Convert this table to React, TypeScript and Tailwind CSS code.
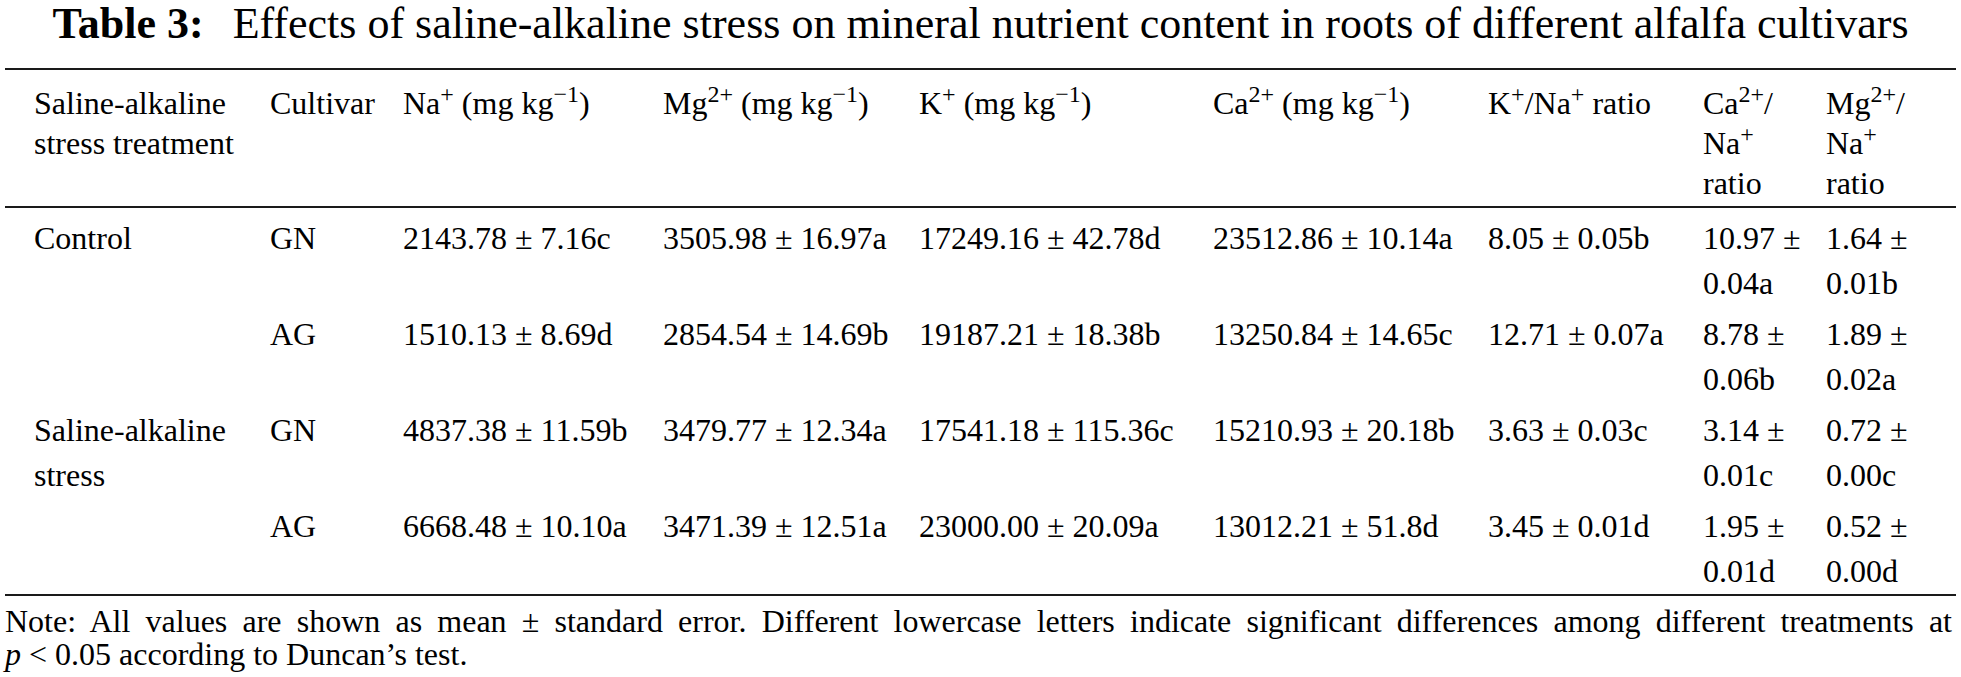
import React from "react";

type Row = {
  t: React.ReactNode;
  c: string;
  v: string[];
  r1: [string, string];
  r2: [string, string];
};

const rows: Row[] = [
  {
    t: "Control",
    c: "GN",
    v: ["2143.78 ± 7.16c", "3505.98 ± 16.97a", "17249.16 ± 42.78d", "23512.86 ± 10.14a", "8.05 ± 0.05b"],
    r1: ["10.97 ±", "0.04a"],
    r2: ["1.64 ±", "0.01b"],
  },
  {
    t: "",
    c: "AG",
    v: ["1510.13 ± 8.69d", "2854.54 ± 14.69b", "19187.21 ± 18.38b", "13250.84 ± 14.65c", "12.71 ± 0.07a"],
    r1: ["8.78 ±", "0.06b"],
    r2: ["1.89 ±", "0.02a"],
  },
  {
    t: (
      <>
        Saline-alkaline
        <br />
        stress
      </>
    ),
    c: "GN",
    v: ["4837.38 ± 11.59b", "3479.77 ± 12.34a", "17541.18 ± 115.36c", "15210.93 ± 20.18b", "3.63 ± 0.03c"],
    r1: ["3.14 ±", "0.01c"],
    r2: ["0.72 ±", "0.00c"],
  },
  {
    t: "",
    c: "AG",
    v: ["6668.48 ± 10.10a", "3471.39 ± 12.51a", "23000.00 ± 20.09a", "13012.21 ± 51.8d", "3.45 ± 0.01d"],
    r1: ["1.95 ±", "0.01d"],
    r2: ["0.52 ±", "0.00d"],
  },
];

const cols =
  "grid grid-cols-[265px_133px_260px_256px_294px_275px_215px_123px_131px]";

export default function App() {
  return (
    <div className="w-[1961px] h-[677px] bg-white text-black overflow-hidden [font-family:'Liberation_Serif','Times_New_Roman',serif]">
      <h1 className="text-center text-[44px] leading-[48px] font-normal whitespace-nowrap">
        <span className="font-bold">Table 3:</span>
        <span className="ml-[29px]">
          Effects of saline-alkaline stress on mineral nutrient content in roots of different alfalfa cultivars
        </span>
      </h1>
      <div className="px-[5px]">
        <div className="mt-[20px] h-[2px] bg-[#1a1a1a]" />
        <div className={`${cols} text-[32px] leading-[40px] pt-[13px] pb-[3px] whitespace-nowrap`}>
          <div className="pl-[29px]">
            Saline-alkaline
            <br />
            stress treatment
          </div>
          <div>Cultivar</div>
          <div>
            Na<sup>+</sup> (mg kg<sup>−1</sup>)
          </div>
          <div>
            Mg<sup>2+</sup> (mg kg<sup>−1</sup>)
          </div>
          <div>
            K<sup>+</sup> (mg kg<sup>−1</sup>)
          </div>
          <div>
            Ca<sup>2+</sup> (mg kg<sup>−1</sup>)
          </div>
          <div>
            K<sup>+</sup>/Na<sup>+</sup> ratio
          </div>
          <div>
            Ca<sup>2+</sup>/
            <br />
            Na<sup>+</sup>
            <br />
            ratio
          </div>
          <div>
            Mg<sup>2+</sup>/
            <br />
            Na<sup>+</sup>
            <br />
            ratio
          </div>
        </div>
        <div className="h-[2px] bg-[#1a1a1a]" />
        <div className="flex flex-col gap-[6px] pt-[8px] text-[32px] leading-[45px] whitespace-nowrap">
          {rows.map((r, i) => (
            <div key={i} className={`${cols} h-[90px]`}>
              <div className="pl-[29px]">{r.t}</div>
              <div>{r.c}</div>
              {r.v.map((x, j) => (
                <div key={j}>{x}</div>
              ))}
              <div>
                {r.r1[0]}
                <br />
                {r.r1[1]}
              </div>
              <div>
                {r.r2[0]}
                <br />
                {r.r2[1]}
              </div>
            </div>
          ))}
        </div>
        <div className="h-[2px] bg-[#1a1a1a]" />
        <div className="mt-[9px] pr-[4px] text-[32px] leading-[33px]">
          <div className="text-justify [text-align-last:justify]">
            Note: All values are shown as mean ± standard error. Different lowercase letters indicate significant
            differences among different treatments at
          </div>
          <div>
            <i>p</i> &lt; 0.05 according to Duncan’s test.
          </div>
        </div>
      </div>
    </div>
  );
}
